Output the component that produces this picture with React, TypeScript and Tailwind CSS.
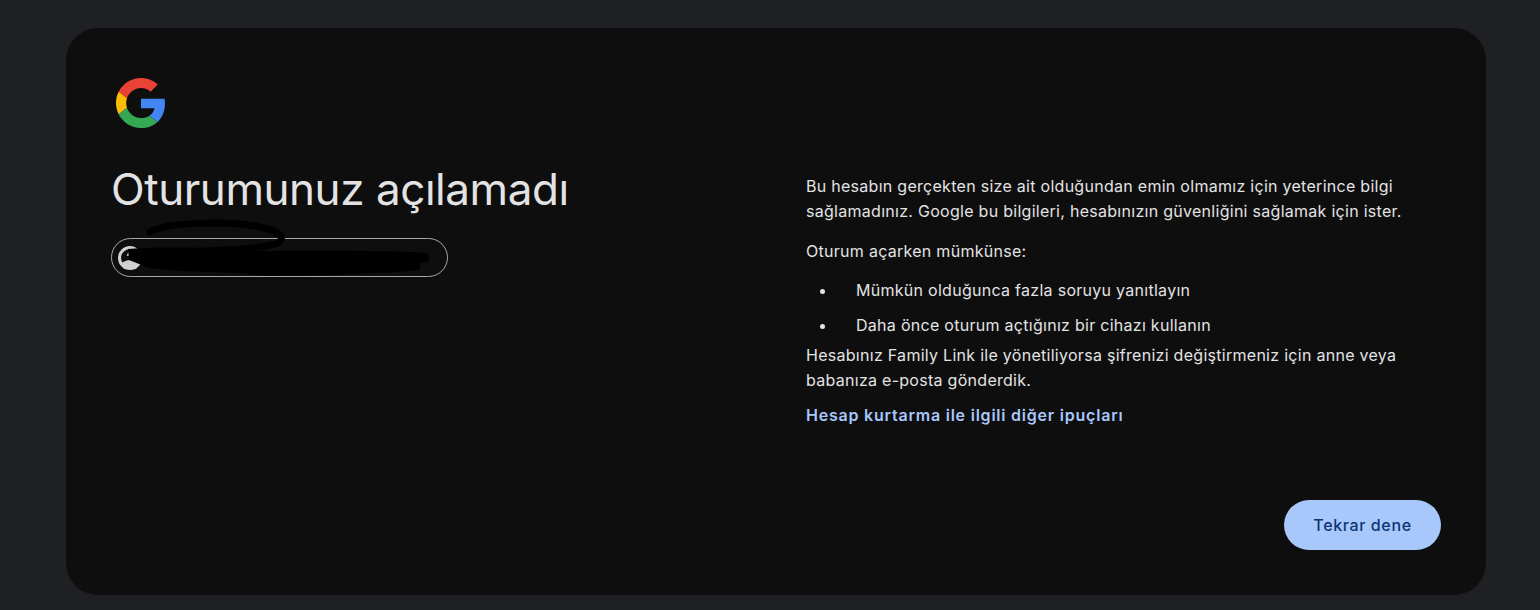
export default function App() {
  return (
    <div className="h-[610px] w-[1540px] overflow-hidden bg-[#1f2023] pt-[28px] pl-[66px] font-['Inter',sans-serif]">
      <div className="flex h-[567px] w-[1420px] rounded-[32px] bg-[#0e0e0f] pt-[50px] pl-[45px]">
        <div className="w-[695px] shrink-0">
          <svg width="50" height="50" viewBox="0 0 48 48" className="ml-[5px] block">
            <path fill="#EA4335" d="M24 9.5c3.54 0 6.71 1.22 9.21 3.6l6.85-6.85C35.9 2.38 30.47 0 24 0 14.62 0 6.51 5.38 2.56 13.22l7.98 6.19C12.43 13.72 17.74 9.5 24 9.5z" />
            <path fill="#4285F4" d="M46.98 24.55c0-1.57-.15-3.09-.38-4.55H24v9.02h12.94c-.58 2.96-2.26 5.48-4.78 7.18l7.73 6c4.51-4.18 7.09-10.36 7.09-17.65z" />
            <path fill="#FBBC05" d="M10.53 28.59c-.48-1.45-.76-2.99-.76-4.59s.27-3.14.76-4.59l-7.98-6.19C.92 16.46 0 20.12 0 24c0 3.88.92 7.54 2.56 10.78l7.97-6.19z" />
            <path fill="#34A853" d="M24 48c6.48 0 11.93-2.13 15.89-5.81l-7.73-6c-2.15 1.45-4.92 2.3-8.16 2.3-6.26 0-11.57-4.22-13.47-9.91l-7.98 6.19C6.51 42.62 14.62 48 24 48z" />
          </svg>
          <h1 className="mt-[33px] h-[57px] text-[44px] leading-[56px] font-normal tracking-[-0.45px] text-[#e3e3e3]">Oturumunuz açılamadı</h1>
          <div className="relative mt-[20px] flex h-[39px] w-[337px] items-center rounded-full border border-[#a8a8a8] pl-[6px]">
            <svg width="24" height="26" viewBox="0 0 24 26" className="block">
              <circle cx="12" cy="13" r="10.5" fill="none" stroke="#d0d0d0" strokeWidth="3" />
              <path fill="#d0d0d0" d="M3 19c3-3 6-4 9-4s6 1 9 4l-3 5H6z" />
              <path fill="none" stroke="#d0d0d0" strokeWidth="2" d="M10 11c0-3 2-4 5-5" />
            </svg>
            <svg width="340" height="62" viewBox="0 0 340 62" className="absolute top-[-21px] left-[5px]">
              <path fill="none" stroke="#000" strokeWidth="7" strokeLinecap="round" d="M33 14C50 4 110 3 138 8c28 5 32 14 20 18-20 6-60 6-85 8" />
              <path fill="#000" d="M11 31c40-3 90-1 130 2 50 0 120-1 170 2l1 8-8 2-2 7-20 2-70 3-60 1-30-3-60-2-30-3-20-8z" />
            </svg>
          </div>
        </div>
        <div className="mt-[96px] w-[635px] text-[16px] leading-[25px] tracking-[0.28px] text-[#e3e3e3]">
          <p>Bu hesabın gerçekten size ait olduğundan emin olmamız için yeterince bilgi sağlamadınız. Google bu bilgileri, hesabınızın güvenliğini sağlamak için ister.</p>
          <p className="mt-[15px]">Oturum açarken mümkünse:</p>
          <ul className="mt-[14px] list-disc pl-[31px]">
            <li className="pl-[19px]">Mümkün olduğunca fazla soruyu yanıtlayın</li>
            <li className="mt-[10px] pl-[19px]">Daha önce oturum açtığınız bir cihazı kullanın</li>
          </ul>
          <p className="mt-[5px]">Hesabınız Family Link ile yönetiliyorsa şifrenizi değiştirmeniz için anne veya babanıza e-posta gönderdik.</p>
          <p className="mt-[10px] font-semibold tracking-[0.78px] text-[#a8c7fa]">Hesap kurtarma ile ilgili diğer ipuçları</p>
          <div className="mt-[72px] flex justify-end">
            <button className="h-[50px] w-[157px] rounded-full bg-[#a8c7fa] text-[16px] font-medium tracking-[0.62px] text-[#0b3577]">Tekrar dene</button>
          </div>
        </div>
      </div>
    </div>
  );
}
